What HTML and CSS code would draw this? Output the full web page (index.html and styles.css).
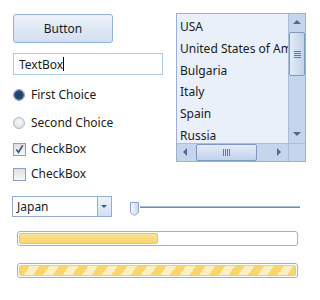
FILE: index.html
```html
<!DOCTYPE html>
<html>
<head>
<meta charset="utf-8">
<link rel="stylesheet" href="styles.css">
</head>
<body>
<div class="top">
  <div class="left">
    <div class="btn">Button</div>
    <div class="textbox">TextBox<span class="caret"></span></div>
    <div class="opt r1"><span class="radio on"></span>First Choice</div>
    <div class="opt r2"><span class="radio"></span>Second Choice</div>
    <div class="opt c1"><span class="check"><svg width="12" height="12" viewBox="0 0 12 12"><path d="M2.5 6.5 L5 9.5 L9.5 2" fill="none" stroke="#3a5684" stroke-width="1.8"/></svg></span>CheckBox</div>
    <div class="opt c2"><span class="check"></span>CheckBox</div>
  </div>
  <div class="listbox">
    <div class="lb-main">
      <div class="items">
        <div class="item">USA</div>
        <div class="item">United States of America</div>
        <div class="item">Bulgaria</div>
        <div class="item">Italy</div>
        <div class="item">Spain</div>
        <div class="item">Russia</div>
      </div>
      <div class="vscroll">
        <div class="arr up"></div>
        <div class="vtrack"><div class="vthumb"><span class="grip-h"></span></div></div>
        <div class="arr down"></div>
      </div>
    </div>
    <div class="lb-bottom">
      <div class="hscroll">
        <div class="arr left"></div>
        <div class="htrack"><div class="hthumb"><span class="grip-v"></span></div></div>
        <div class="arr right"></div>
      </div>
      <div class="corner"></div>
    </div>
  </div>
</div>
<div class="row2">
  <div class="combo"><span class="combo-text">Japan</span><span class="combo-btn"><span class="tri"></span></span></div>
  <div class="slider"><span class="sthumb"><svg width="10" height="14" viewBox="0 0 10 14"><defs><linearGradient id="g" x1="0" y1="0" x2="1" y2="0"><stop offset="0" stop-color="#f4f8fd"/><stop offset="1" stop-color="#c9d8ee"/></linearGradient></defs><path d="M0.5 0.5 H8.5 V10.5 L4.5 13.5 L0.5 10.5 Z" fill="url(#g)" stroke="#8ba3c9"/></svg></span><span class="strack"></span></div>
</div>
<div class="pb pb1"><div class="pfill"></div></div>
<div class="pb pb2"><div class="pstripe"></div></div>
</body>
</html>
```
FILE: styles.css
```css
html, body { margin: 0; padding: 0; background: #fff; }
body { width: 320px; height: 300px; font-family: "Noto Sans", "Open Sans", sans-serif; font-size: 12px; color: #1b1b1b; }

.top { display: flex; align-items: flex-start; padding-top: 13px; }
.left { width: 163px; padding-left: 13px; box-sizing: border-box; }

.btn { margin-top: 1px; width: 100px; height: 29px; box-sizing: border-box; border: 1px solid #97afd3; border-radius: 3px;
  background: linear-gradient(#eef3fa, #dfe8f5 50%, #d2dff1); display: flex; align-items: center; justify-content: center; font-size: 12px; }

.textbox { margin-top: 10px; width: 150px; height: 22px; box-sizing: border-box; border: 1px solid #b4c5df; padding-left: 5px;
  display: flex; align-items: center; }
.caret { display: inline-block; width: 1px; height: 14px; background: #000; margin-left: 0; }

.opt { display: flex; align-items: center; height: 14px; line-height: 14px; }
.r1 { margin-top: 13px; }
.r2 { margin-top: 14px; }
.c1 { margin-top: 12px; }
.c2 { margin-top: 11px; }

.radio { width: 12px; height: 12px; border-radius: 50%; box-sizing: border-box; border: 1px solid #a9bad3; margin-right: 6px;
  background: radial-gradient(circle at 50% 40%, #fafafa, #d6d6d6); }
.radio.on { background: radial-gradient(circle, #24446f 0 3.5px, #3d5d8a 4.5px, #c9d6e8 5.5px); border-color: #8fa5c8; }

.check { width: 13px; height: 13px; box-sizing: border-box; border: 1px solid #8aa1c6; margin-right: 5px; display: flex; align-items: center; justify-content: center;
  background: linear-gradient(#e0e0e0, #f7f7f7); }

.listbox { margin-left: 13px; width: 130px; height: 149px; box-sizing: border-box; border: 1px solid #9ab0d3; background: #e9f0f9; display: flex; flex-direction: column; overflow: hidden; }
.lb-main { display: flex; flex: 1; min-height: 0; }
.items { flex: 1; overflow: hidden; white-space: nowrap; padding-top: 1px; }
.item { height: 21.8px; box-sizing: border-box; padding-top: 4px; line-height: 16px; padding-left: 3px; }

.vscroll { width: 17px; display: flex; flex-direction: column; background: #c5d5eb; border-left: 1px solid #a8bddb; box-sizing: border-box; }
.arr { flex: none; position: relative; }
.vscroll .arr { height: 17px; }
.arr.up::after, .arr.down::after, .arr.left::after, .arr.right::after { content: ""; position: absolute; width: 0; height: 0; }
.arr.up::after { left: 4px; top: 6px; border-left: 4px solid transparent; border-right: 4px solid transparent; border-bottom: 4px solid #4b6a98; }
.arr.down::after { left: 4px; top: 6px; border-left: 4px solid transparent; border-right: 4px solid transparent; border-top: 4px solid #4b6a98; }
.vtrack { flex: 1; position: relative; }
.vthumb { margin: 1px 0 0 0; height: 44px; box-sizing: border-box; border: 1px solid #7e9ac4; border-radius: 2px;
  background: linear-gradient(90deg, #e4ecf7, #c1d2ea); display: flex; align-items: center; justify-content: center; }
.grip-h { width: 7px; height: 7px; background: repeating-linear-gradient(#5f7ca8 0 1px, transparent 1px 2px); }

.lb-bottom { display: flex; height: 17px; flex: none; border-top: 1px solid #a8bddb; }
.hscroll { flex: 1; display: flex; background: #c5d5eb; }
.hscroll .arr { width: 17px; }
.arr.left::after { left: 6px; top: 4px; border-top: 4px solid transparent; border-bottom: 4px solid transparent; border-right: 4px solid #4b6a98; }
.arr.right::after { left: 6px; top: 4px; border-top: 4px solid transparent; border-bottom: 4px solid transparent; border-left: 4px solid #4b6a98; }
.htrack { flex: 1; }
.hthumb { margin-left: 2px; width: 61px; height: 100%; box-sizing: border-box; border: 1px solid #7e9ac4; border-radius: 2px;
  background: linear-gradient(#e4ecf7, #c1d2ea); display: flex; align-items: center; justify-content: center; }
.grip-v { width: 7px; height: 7px; background: repeating-linear-gradient(90deg, #5f7ca8 0 1px, transparent 1px 2px); }
.corner { width: 17px; background: #c5d5eb; border-left: 1px solid #a8bddb; box-sizing: border-box; }

.row2 { display: flex; align-items: center; margin-top: 15px; padding-left: 12px; }
.combo { width: 100px; height: 21px; box-sizing: border-box; border: 1px solid #94acd0; display: flex; }
.combo-text { flex: 1; padding-left: 4px; line-height: 19px; }
.combo-btn { width: 13px; border-left: 1px solid #94acd0; background: linear-gradient(#eef3fa, #d3dff0); position: relative; }
.tri { position: absolute; left: 3px; top: 8px; border-left: 3px solid transparent; border-right: 3px solid transparent; border-top: 3px solid #3d5a86; }
.slider { margin-left: 18px; display: flex; align-items: center; width: 170px; height: 21px; }
.sthumb { display: block; height: 14px; margin-top: 5px; }
.strack { flex: 1; height: 1px; background: #6f8cb8; border-top: 1px solid #a9bbd8; margin-top: 0; }

.pb { margin-left: 17px; width: 281px; height: 15px; box-sizing: border-box; border: 1px solid #9cb0d3; border-radius: 3px; padding: 1px; }
.pb1 { margin-top: 14px; }
.pb2 { margin-top: 17px; }
.pfill { width: 139px; height: 100%; box-sizing: border-box; border: 1px solid #f2c94a; border-radius: 2px; background: linear-gradient(#fbe28f, #f8d66c); }
.pstripe { width: 100%; height: 100%; box-sizing: border-box; border: 1px solid #f4d060; border-radius: 2px;
  background: repeating-linear-gradient(125deg, #f8d66c 0 8px, #fcefc6 8px 16px); }
```
